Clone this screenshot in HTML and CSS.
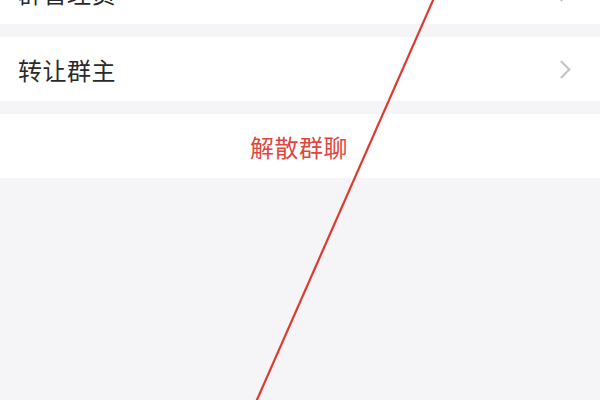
FILE: index.html
```html
<!DOCTYPE html>
<html lang="zh">
<head>
<meta charset="utf-8">
<link rel="stylesheet" href="styles.css">
</head>
<body>
<div class="page">
  <div class="group first">
    <div class="row"><span class="label">群管理员</span><span class="chev"></span></div>
  </div>
  <div class="group">
    <div class="row"><span class="label">转让群主</span><span class="chev"></span></div>
  </div>
  <div class="group">
    <div class="row danger"><span class="label">解散群聊</span></div>
  </div>
</div>
<svg class="mark" width="600" height="400" viewBox="0 0 600 400">
  <line x1="434" y1="-2" x2="256" y2="402" stroke="#de3a30" stroke-width="2.2"/>
</svg>
</body>
</html>
```
FILE: styles.css
```css
html, body {
  margin: 0;
  padding: 0;
  width: 600px;
  height: 400px;
  overflow: hidden;
  background: #f5f5f7;
  font-family: "Noto Sans CJK SC", "Noto Sans", sans-serif;
}
.page {
  display: flex;
  flex-direction: column;
  gap: 13px;
  margin-top: -40px;
}
.row {
  height: 64px;
  background: #ffffff;
  display: flex;
  align-items: center;
  justify-content: space-between;
  padding: 0 28px 0 18px;
}
.label {
  font-size: 24px;
  color: #2a2a2a;
  letter-spacing: 0.5px;
}
.chev {
  width: 11px;
  height: 11px;
  border-top: 2px solid #c4c4c6;
  border-right: 2px solid #c4c4c6;
  transform: rotate(45deg);
  margin-right: 4px;
}
.danger {
  justify-content: center;
  padding: 0;
}
.danger .label {
  color: #e0463e;
  margin-left: -2px;
}
.mark {
  position: absolute;
  left: 0;
  top: 0;
}
```
